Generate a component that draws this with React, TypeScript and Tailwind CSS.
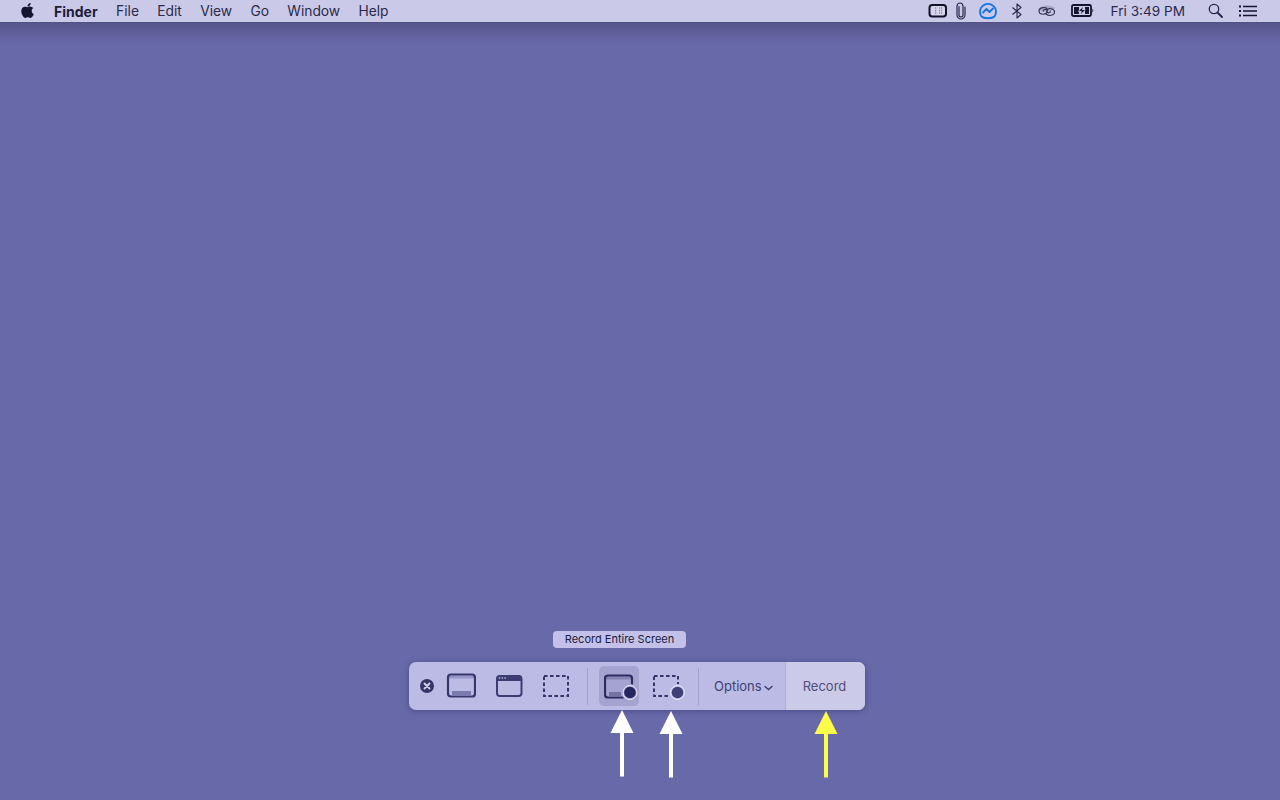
import React from 'react';
import { FaApple } from 'react-icons/fa';

const ScreenIcon = () => (
  <svg width="30" height="26" viewBox="0 0 30 26" fill="none">
    <rect x="2.500" y="2.500" width="26" height="3" fill="#9796c8" />
    <rect x="2" y="1.500" width="27" height="22" rx="3" stroke="#36366c" strokeWidth="2.200" />
    <rect x="6" y="18" width="19" height="4.500" fill="#7c7bb0" />
  </svg>
);

const WindowIcon = () => (
  <svg width="28" height="24" viewBox="0 0 28 24" fill="none">
    <rect x="2" y="2" width="24.500" height="20" rx="3" stroke="#3c3c72" strokeWidth="2" />
    <path d="M4 1.500h20.500a2.500 2.500 0 0 1 2.500 2.500v3H1.500V4A2.500 2.500 0 0 1 4 1.500z" fill="#3c3c72" />
    <circle cx="4.500" cy="4" r="0.800" fill="#d5d4ef" />
    <circle cx="7.300" cy="4" r="0.800" fill="#d5d4ef" />
    <circle cx="10.100" cy="4" r="0.800" fill="#d5d4ef" />
  </svg>
);

const SelectionIcon = () => (
  <svg width="28" height="24" viewBox="0 0 28 24" fill="none">
    <rect x="2" y="2" width="24" height="20" stroke="#36366c" strokeWidth="2" strokeDasharray="3.600 2.400" />
  </svg>
);

const RecordScreenIcon = () => (
  <svg width="34" height="28" viewBox="0 0 34 28" fill="none">
    <rect x="1.500" y="2.500" width="26" height="3" fill="#8584b4" />
    <rect x="1" y="1.500" width="27" height="22" rx="3" stroke="#2b2b62" strokeWidth="2.200" />
    <rect x="5" y="18" width="12" height="4.500" fill="#75739f" />
    <circle cx="26" cy="18.500" r="8.500" fill="#a5a3cf" />
    <circle cx="26" cy="18.500" r="7" fill="#a5a3cf" stroke="#ecebfa" strokeWidth="1" />
    <circle cx="26" cy="18.500" r="5.800" fill="#252560" />
  </svg>
);

const RecordSelectionIcon = () => (
  <svg width="34" height="28" viewBox="0 0 34 28" fill="none">
    <rect x="2" y="2" width="24" height="20" stroke="#36366c" strokeWidth="2" strokeDasharray="3.600 2.400" />
    <circle cx="25.500" cy="18.500" r="8.500" fill="#bcbbe5" />
    <circle cx="25.500" cy="18.500" r="7" fill="#bcbbe5" stroke="#ecebfa" strokeWidth="1" />
    <circle cx="25.500" cy="18.500" r="5.800" fill="#414177" />
  </svg>
);

const Arrow: React.FC<{ color: string; className: string }> = ({ color, className }) => (
  <svg className={className} width="24" height="67" viewBox="0 0 24 67">
    <path d="M12 0 L23.500 23 H14 V66.500 H10 V23 H0.500 Z" fill={color} />
  </svg>
);

const menuItems = ['File', 'Edit', 'View', 'Go', 'Window', 'Help'];

export default function App() {
  return (
    <div className="w-[1280px] h-[800px] overflow-hidden flex flex-col bg-[#6869a9] font-['Inter',sans-serif]">
      <div className="h-[22px] shrink-0 flex items-center bg-[#cbc9e8] text-[#1c1c3c] text-[13.8px]">
        <FaApple className="ml-[20px] w-[15px] h-[17px] text-[#14142e] mb-[1px]" />
        <span className="ml-[19px] font-bold text-[14px]">Finder</span>
        <div className="ml-[18.500px] flex gap-[18.300px] text-[#2a2a4c]">
          {menuItems.map(item => <span key={item}>{item}</span>)}
        </div>

        {/* status icons */}
        <div className="ml-auto flex items-center">
          <svg width="20" height="14" viewBox="0 0 20 14" fill="none">
            <rect x="1.500" y="1" width="16.500" height="11.500" rx="2.800" fill="#d6d5ec" stroke="#111128" strokeWidth="2" />
            <path d="M11 4h4M11 6.500h4M11 9h4M7 4h2M7 6.500h2M7 9h2" stroke="#8c8ca8" strokeWidth="1.300" strokeDasharray="1.200 0.800" />
          </svg>
          <svg className="ml-[7px]" width="12" height="18" viewBox="0 0 12 18" fill="none">
            <path d="M4 4.500v8.500a2 2 0 0 0 4 0V4a3 3 0 0 0-6 0v9a4 4 0 0 0 8 0V5" stroke="#26264a" strokeWidth="1.200" strokeLinecap="round" />
          </svg>
          <svg className="ml-[11px]" width="20" height="18" viewBox="0 0 20 18" fill="none">
            <path d="M3.500 14.500A8 8 0 1 1 16.500 14.500 M3.500 14.500C6 16.800 14 16.800 16.500 14.500" stroke="#1276e0" strokeWidth="1.900" strokeLinecap="round" />
            <path d="M5 10.500l3.500-3.500 3 3 3.500-3.500" stroke="#1276e0" strokeWidth="1.800" strokeLinecap="round" strokeLinejoin="round" />
          </svg>
          <svg className="ml-[13px]" width="12" height="16" viewBox="0 0 12 16" fill="none">
            <path d="M1.500 4.500L10 11.500 6 15V1l4 3.500L1.500 11.500" stroke="#26264a" strokeWidth="1.100" strokeLinejoin="round" />
          </svg>
          <svg className="ml-[14px]" width="19" height="14" viewBox="0 0 19 14" fill="none">
            <path d="M1 5.500C4 1 13 0 18 4L13 7.500 6 8z" fill="#a9a8c8" />
            <path d="M10 4.500c-3-2-8-.5-8 2.500 0 3.500 5 4 7.500 2 1.500-1.200 1-3-.5-3.500-1.500-.4-3 .4-2.700 1.500M9 10c3 2.500 8 1.500 8.500-1.500C18 5 13 3.500 10.500 5.500 9 7 9.500 8.500 11 8.800c1.400.2 2.500-.5 2.300-1.500" stroke="#303050" strokeWidth="1.100" strokeLinecap="round" />
          </svg>
          <svg className="ml-[15px]" width="23" height="13" viewBox="0 0 23 13" fill="none">
            <rect x="1" y="1" width="19" height="11" rx="1.500" stroke="#14142e" strokeWidth="1.800" />
            <path d="M3 3h5v7H3zM14 3h4v7h-4z" fill="#14142e" />
            <path d="M13 1.500L6.500 7.500H10L8.500 11.500 15 5.500H11.500z" fill="#cbc9e8" />
            <path d="M12 3L8 7h2.800L9.800 10 14 6h-3z" fill="#14142e" />
            <path d="M21.500 4.500c1 .5 1 3.500 0 4z" fill="#14142e" />
          </svg>
          <span className="ml-[17px] text-[#2a2a4c] text-[13.6px]">Fri 3:49 PM</span>
          <svg className="ml-[23px]" width="15" height="15" viewBox="0 0 15 15" fill="none">
            <circle cx="6" cy="6" r="4.700" stroke="#26264a" strokeWidth="1.300" />
            <path d="M9.500 9.500l4.500 4.500" stroke="#26264a" strokeWidth="1.800" strokeLinecap="round" />
          </svg>
          <svg className="ml-[16px] mr-[23px]" width="18" height="12" viewBox="0 0 18 12" fill="none">
            <path d="M0 1.500h2M0 6h2M0 10.500h2" stroke="#14142e" strokeWidth="2" />
            <path d="M4 1.500h14M4 6h14M4 10.500h14" stroke="#14142e" strokeWidth="1.700" />
          </svg>
        </div>
      </div>

      <div className="relative flex-1 flex flex-col justify-end items-start pl-[409px] pb-[90px] bg-[linear-gradient(#505085,#58588f_2px,#6869a9_24px)]">
        <div className="ml-[144px] mb-[14px] w-[133px] h-[17px] rounded-[4px] bg-[#c3c1e9] flex items-center justify-center text-[11px] text-[#1c1c3c]">
          Record Entire Screen
        </div>

        {/* capture toolbar */}
        <div className="w-[456px] h-[48px] flex rounded-[7px] overflow-hidden bg-[#bcbbe5] shadow-[0_1px_6px_rgba(40,40,90,0.45)]">
          <div className="flex items-center flex-1">
            <div className="ml-[11px] w-[14px] h-[14px] rounded-full bg-[#35356a] flex items-center justify-center">
              <svg width="8" height="8" viewBox="0 0 8 8"><path d="M1.500 1.500l5 5M6.500 1.500l-5 5" stroke="#d5d4ef" strokeWidth="1.800" strokeLinecap="round" /></svg>
            </div>
            <div className="ml-[12px]"><ScreenIcon /></div>
            <div className="ml-[19px]"><WindowIcon /></div>
            <div className="ml-[19px]"><SelectionIcon /></div>
            <div className="ml-[17px] w-px h-[37px] bg-[#a3a2cf]" />
            <div className="ml-[11px] w-[40px] h-[40px] rounded-[5px] bg-[#a5a3cf] flex items-center justify-center pl-[4px] pt-[3px]"><RecordScreenIcon /></div>
            <div className="ml-[13px] mt-[4px]"><RecordSelectionIcon /></div>
            <div className="ml-[12px] w-px h-[37px] bg-[#a3a2cf]" />
            <div className="ml-[15px] pt-[1px] flex items-center text-[13px] text-[#3f3f72]">
              Options
              <svg className="ml-[2px] mt-[3px]" width="9" height="6" viewBox="0 0 9 6" fill="none"><path d="M1 1.500l3.500 3 3.500-3" stroke="#3f3f72" strokeWidth="1.400" strokeLinecap="round" /></svg>
            </div>
          </div>
          <div className="w-[80px] shrink-0 flex items-center justify-center pr-[2px] pt-[1px] bg-[#cbcae9] border-l border-[#b0afd9] text-[13px] text-[#4f4f78]">
            Record
          </div>
        </div>

        <Arrow color="#ffffff" className="absolute left-[610px] top-[688px]" />
        <Arrow color="#ffffff" className="absolute left-[659px] top-[689px]" />
        <Arrow color="#fcfb48" className="absolute left-[814px] top-[689px]" />
      </div>
    </div>
  );
}
